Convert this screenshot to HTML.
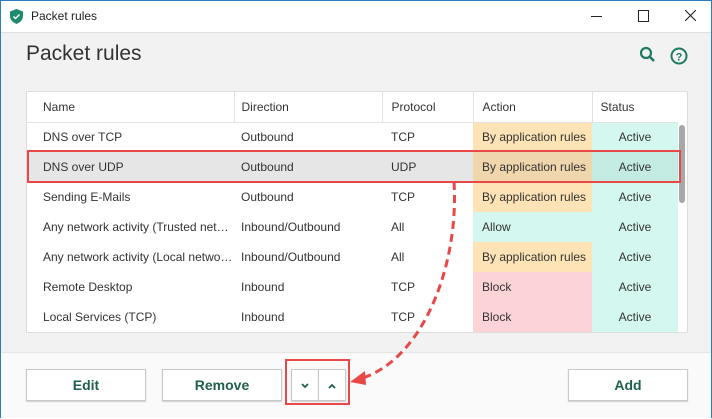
<!DOCTYPE html><html><head><style>
body{margin:0;width:712px;height:418px;overflow:hidden;font-family:"Liberation Sans",sans-serif;}
.win{position:absolute;left:0;top:0;width:710px;height:416px;border:1px solid #2b7cc0;background:#f2f2f2;}
.tb{position:absolute;left:0;top:0;width:710px;height:31px;background:#fff;border-bottom:1px solid #e0e0e0;}
.t{position:absolute;font-size:12px;color:#222;white-space:nowrap}
table{position:absolute;border-collapse:collapse;table-layout:fixed;background:#fff;font-size:12px;color:#333;}
td{height:30px;padding:0 0 0 16px;white-space:nowrap;overflow:hidden;text-overflow:ellipsis;box-sizing:border-box}
.wrap{position:absolute;left:25px;top:90px;width:660px;height:240px;border:1px solid #ddd;background:#fff;overflow:hidden}
.o{background:#fde3b6}.c{background:#d4f8ef;text-align:center;padding:0}.p{background:#fcd4d8}
.sel td{background:#e6e6e6}.sel .o{background:#f0d6ad}.sel .c{background:#c3ebe2}
td:nth-child(2){padding-left:7px}td:nth-child(3),td:nth-child(4){padding-left:9px}
.btn{position:absolute;top:368px;height:30px;background:#fff;border:1px solid #c8c8c8;box-shadow:0 1px 1px #ccc;font-size:14px;font-weight:bold;color:#1f5f4e;text-align:center;line-height:30px}
</style></head><body><div class="win">
<div class="tb">
<svg style="position:absolute;left:9px;top:8px" width="13" height="15" viewBox="0 0 13 15"><path d="M6.5 0L13 2.5V7c0 4-3 6.5-6.5 8C3 13.5 0 11 0 7V2.5z" fill="#1e8a6e"/><path d="M3.5 7.5l2 2 4-4" stroke="#fff" stroke-width="1.5" fill="none"/></svg>
<div class="t" style="left:30px;top:8px;font-size:12px">Packet rules</div>
<div style="position:absolute;left:590px;top:15px;width:11px;height:1px;background:#222"></div>
<div style="position:absolute;left:637px;top:9px;width:9px;height:10px;border:1px solid #222"></div>
<svg style="position:absolute;left:684px;top:9px" width="11" height="11"><path d="M0 0L11 11M11 0L0 11" stroke="#222" stroke-width="1.1"/></svg>
</div>
<div class="t" style="left:25px;top:41px;font-size:21px;color:#333">Packet rules</div>
<svg style="position:absolute;left:638px;top:45px" width="18" height="18" viewBox="0 0 18 18"><circle cx="7" cy="7" r="5" stroke="#1e7a62" stroke-width="2.2" fill="none"/><path d="M10.5 10.5L15 15" stroke="#1e7a62" stroke-width="2.5"/></svg>
<svg style="position:absolute;left:669px;top:46px" width="18" height="18" viewBox="0 0 18 18"><circle cx="9" cy="9" r="7.5" stroke="#1e7a62" stroke-width="2" fill="none"/><text x="9" y="13.5" font-size="11" font-weight="bold" text-anchor="middle" fill="#1e7a62" font-family="Liberation Sans">?</text></svg>
<div class="wrap"><table style="left:0;top:0;width:651px">
<colgroup><col style="width:207px"><col style="width:148px"><col style="width:91px"><col style="width:119px"><col style="width:86px"></colgroup>
<tr><td style="height:30px;border-right:1px solid #e2e2e2;border-bottom:1px solid #e2e2e2">Name</td><td style="height:30px;border-right:1px solid #e2e2e2;border-bottom:1px solid #e2e2e2">Direction</td><td style="border-right:1px solid #e2e2e2;border-bottom:1px solid #e2e2e2">Protocol</td><td style="border-right:1px solid #e2e2e2;border-bottom:1px solid #e2e2e2">Action</td><td style="border-bottom:1px solid #e2e2e2;padding-left:8px">Status</td></tr>
<tr><td>DNS over TCP</td><td>Outbound</td><td>TCP</td><td class="o">By application rules</td><td class="c">Active</td></tr>
<tr class="sel"><td>DNS over UDP</td><td>Outbound</td><td>UDP</td><td class="o">By application rules</td><td class="c">Active</td></tr>
<tr><td>Sending E-Mails</td><td>Outbound</td><td>TCP</td><td class="o">By application rules</td><td class="c">Active</td></tr>
<tr><td>Any network activity (Trusted networks)</td><td>Inbound/Outbound</td><td>All</td><td class="c" style="text-align:left;padding-left:9px">Allow</td><td class="c">Active</td></tr>
<tr><td>Any network activity (Local networks)</td><td>Inbound/Outbound</td><td>All</td><td class="o">By application rules</td><td class="c">Active</td></tr>
<tr><td>Remote Desktop</td><td>Inbound</td><td>TCP</td><td class="p">Block</td><td class="c">Active</td></tr>
<tr><td>Local Services (TCP)</td><td>Inbound</td><td>TCP</td><td class="p">Block</td><td class="c">Active</td></tr>
</table>
<div style="position:absolute;left:651px;top:31px;width:9px;height:209px;background:#fff"></div>
<div style="position:absolute;left:652px;top:33px;width:6px;height:78px;background:#a8a8a8;border-radius:3px"></div>
</div>
<div style="position:absolute;left:0;top:351px;width:710px;height:65px;background:#fafafa;border-top:1px solid #e4e4e4"></div>
<div class="btn" style="left:25px;width:118px">Edit</div>
<div class="btn" style="left:161px;width:118px">Remove</div>
<div class="btn" style="left:290px;width:26px"><svg width="10" height="8" viewBox="0 0 10 8"><path d="M2 2L5 5L8 2" stroke="#1f5f4e" stroke-width="1.8" fill="none"/></svg></div>
<div class="btn" style="left:317px;width:26px"><svg width="10" height="8" viewBox="0 0 10 8"><path d="M2 6L5 3L8 6" stroke="#1f5f4e" stroke-width="1.8" fill="none"/></svg></div>
<div class="btn" style="left:567px;width:118px">Add</div>
<div style="position:absolute;left:26px;top:149px;width:650px;height:29px;border:2px solid #e84848"></div>
<div style="position:absolute;left:284px;top:358px;width:61px;height:42px;border:2px solid #e84848"></div>
<svg style="position:absolute;left:0;top:0" width="712" height="418"><path d="M453 181 C458 260 425 355 362 377" stroke="#e84848" stroke-width="3" fill="none" stroke-dasharray="8,5"/><path d="M349 381 L364 370 L365 384 Z" fill="#e84848"/></svg>
</div></body></html>
